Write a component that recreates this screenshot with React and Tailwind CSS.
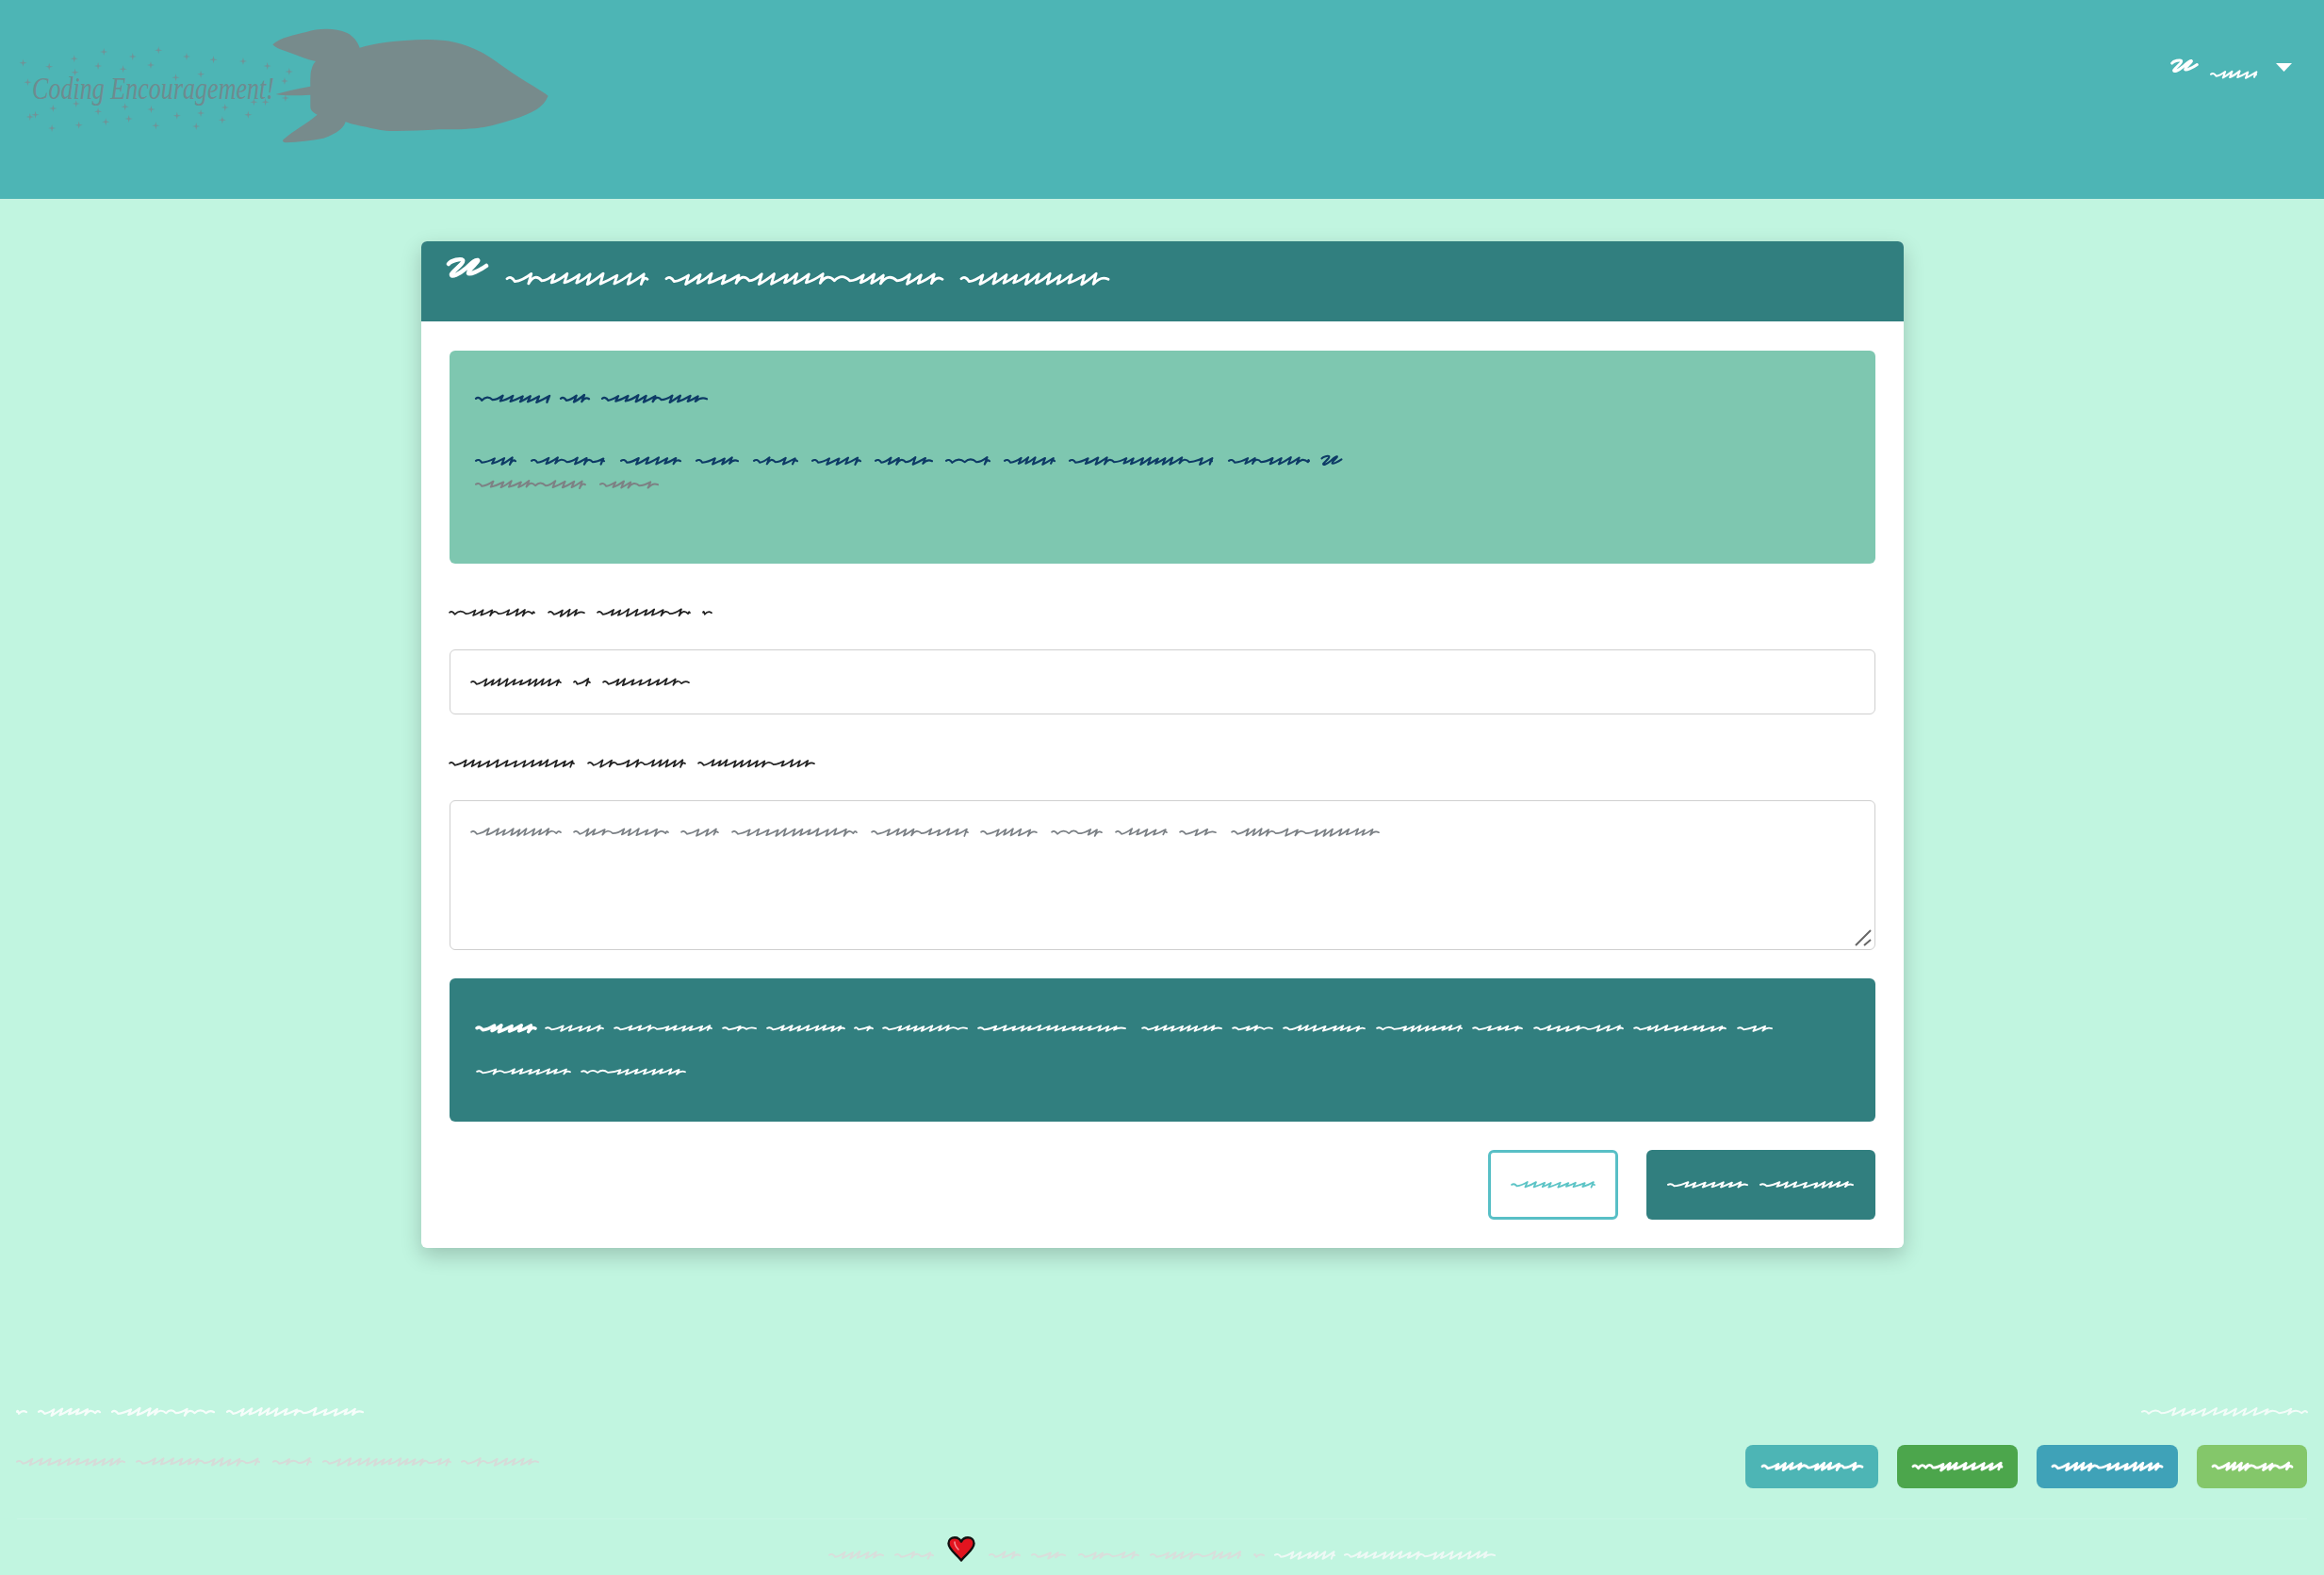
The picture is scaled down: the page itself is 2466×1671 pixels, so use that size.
import React from "react";

function scrawlPath(segs, a, period, seed) {
  let s = seed * 9301 + 49297;
  const rnd = () => {
    s = (s * 9301 + 49297) % 233280;
    return s / 233280;
  };
  const o = segs[0][0];
  const c = a + 1;
  let d = "";
  for (const [x0, x1] of segs) {
    const start = x0 - o;
    const end = x1 - o;
    const back = Math.min(period * 0.3, 3);
    const tail = Math.min(period * 0.7, (end - start) * 0.2);
    let x = start + tail;
    d += `M${start.toFixed(1)} ${(c - a * 0.05).toFixed(1)}Q${(start + tail * 0.5).toFixed(1)} ${(c - a * 0.65).toFixed(1)} ${x.toFixed(1)} ${(c + a * 0.45).toFixed(1)}`;
    while (x < end - period - tail * 0.5) {
      const p = period * (0.8 + rnd() * 0.45);
      const flat = rnd() < 0.12;
      if (flat) {
        const nx = x + p * 1.2;
        d += `Q${(x + p * 0.6).toFixed(1)} ${(c - a * 1.1).toFixed(1)} ${nx.toFixed(1)} ${(c + a * 0.3).toFixed(1)}`;
        x = nx;
      } else {
        const tx = x + p + back;
        const ty = c - a * (0.6 + rnd() * 0.4);
        const bx = tx - back;
        const by = c + a * (0.6 + rnd() * 0.4);
        d += `Q${(x + p * 0.55).toFixed(1)} ${(c + a * 0.3).toFixed(1)} ${tx.toFixed(1)} ${ty.toFixed(1)}L${bx.toFixed(1)} ${by.toFixed(1)}`;
        x = bx;
      }
    }
    d += `Q${((x + end) / 2).toFixed(1)} ${(c - a * 0.6).toFixed(1)} ${end.toFixed(1)} ${(c + a * 0.05).toFixed(1)}`;
  }
  return { d, w: segs[segs.length - 1][1] - o };
}

function Scrawl({ segs, h = 10, sw = 1.6, period = 8, seed = 1, className = "" }) {
  const a = h / 2 - 1;
  const { d, w } = scrawlPath(segs, a, period, seed);
  return (
    <svg width={w} height={h} viewBox={`0 0 ${w} ${h}`} className={`block shrink-0 overflow-visible ${className}`} aria-hidden="true">
      <path d={d} fill="none" stroke="currentColor" strokeWidth={sw} strokeLinecap="round" strokeLinejoin="round" />
    </svg>
  );
}

function ScriptU({ w, h, sw = 3, className = "" }) {
  return (
    <svg width={w} height={h} viewBox="0 0 42 20" className={`block shrink-0 overflow-visible ${className}`} aria-hidden="true">
      <path
        d="M1 5C4 1 14 -1 16 1C18 4 5 13 4 16C3.5 20 12 16 19 10C24 5.5 29 0 32 1C34 2 21 12 22 15C23 17 34 12 41 7"
        fill="none"
        stroke="currentColor"
        strokeWidth={sw}
        strokeLinecap="round"
        strokeLinejoin="round"
      />
    </svg>
  );
}

const stars = [
  [60,200],[128,212],[193,187],[270,165],[345,180],[412,160],[485,180],[555,190],[632,195],[695,210],[752,228],
  [195,230],[255,210],[320,220],[392,207],[457,247],[522,236],[740,258],[72,262],[138,345],[198,330],[255,355],
  [325,340],[393,348],[460,368],[522,360],[585,342],[660,325],[690,325],[742,312],[78,372],[92,365],[275,388],
  [335,378],[135,408],[205,398],[405,400],[510,402],[578,382],[645,365],
];

function Logo() {
  return (
    <div className="relative h-[170px] w-[600px] shrink-0">
      <svg width="600" height="170" viewBox="0 0 600 170" className="block" aria-hidden="true">
        <g transform="translate(280 20) scale(0.3333)">
          <path
            fill="#778b8c"
            d="M28 82C50 60 100 50 135 42C175 30 225 28 265 45C285 55 298 72 305 92C350 78 420 68 520 66C590 66 640 78 700 110C750 140 790 175 860 215C880 228 895 235 905 245C898 262 885 278 865 290C830 310 770 330 700 345C650 352 600 352 560 352C500 355 450 358 400 357C370 355 340 348 330 345C300 340 280 335 260 328C255 345 235 365 190 380C150 388 110 392 70 394C60 392 58 388 62 384C80 368 100 355 115 345C135 332 155 318 170 305C155 298 148 290 148 280L148 242C110 244 70 246 38 240C70 230 110 222 148 215C148 190 148 170 152 160C155 148 160 140 165 135C135 128 110 118 90 110C60 100 40 95 28 82Z"
          />
        </g>
        <g fill="#729297">
          {stars.map(([x, y], i) => (
            <path key={i} d={`M${(x / 2.45).toFixed(1)} ${(y / 3 - 4).toFixed(1)}l.8 3.2 3.2 .8-3.2 .8-.8 3.2-.8-3.2-3.2-.8 3.2-.8z`} />
          ))}
        </g>
      </svg>
      <span className="absolute left-[34px] top-[74px] origin-left scale-x-[0.79] whitespace-nowrap font-['Liberation_Serif',serif] text-[33px] leading-[40px] italic text-[#6f8b8f]">
        Coding Encouragement!
      </span>
    </div>
  );
}

function Heart() {
  return (
    <svg width="30" height="27" viewBox="0 0 30 27" className="block shrink-0" aria-hidden="true">
      <path
        d="M15 25.5C10 19 1.5 14 1.5 7.5C1.5 3.5 4.5 1.2 8 1.2C11 1.2 13.6 2.8 15 5.6C16.4 2.8 19 1.2 22 1.2C25.5 1.2 28.5 3.5 28.5 7.5C28.5 14 20 19 15 25.5Z"
        fill="#e2141f"
        stroke="#111"
        strokeWidth="2.4"
        strokeLinejoin="round"
      />
      <path d="M8 6C8 9 10 12 12 14" fill="none" stroke="#f58d92" strokeWidth="1.6" strokeLinecap="round" />
    </svg>
  );
}

export default function App() {
  return (
    <div className="flex min-h-[1671px] flex-col overflow-hidden bg-[#c1f5e0] font-['Liberation_Sans',sans-serif]">
      <header className="flex h-[212px] shrink-0 justify-between border-b border-[#c8f0e2] bg-[#4db5b5] pr-[34px]">
        <Logo />
        <nav className="mt-[63px] flex items-start text-white">
          <ScriptU w={28} h={15} sw={4.5} />
          <Scrawl segs={[[2346, 2394]]} h={10} sw={2} period={8} seed={3} className="ml-[14px] mt-[11px]" />
          <svg width="17" height="9" viewBox="0 0 17 9" className="ml-[21px] mt-[4px] block" aria-hidden="true">
            <path d="M0 0H17L8.5 9Z" fill="#ffffff" />
          </svg>
        </nav>
      </header>

      <main className="flex justify-center pt-[44px]">
        <section className="w-[1573px] rounded-md bg-white shadow-[0_8px_22px_rgba(0,0,0,0.2)]">
          <div className="flex h-[85px] rounded-t-md bg-[#317f7f] pl-[28px] text-white">
            <ScriptU w={42} h={20} sw={4.5} className="mt-[19px]" />
            <Scrawl
              segs={[[537, 686], [706, 999], [1019, 1175]]}
              h={14}
              sw={2.8}
              period={12}
              seed={5}
              className="ml-[21px] mt-[33px]"
            />
          </div>

          <div className="px-[30px] pb-[30px] pt-[31px]">
            <div className="h-[226px] rounded-md bg-[#7ec7b0] pl-[28px] pt-[46px] text-[#0e3b66]">
              <Scrawl segs={[[506, 583], [596, 626], [640, 751]]} sw={2.3} period={9} seed={7} />
              <div className="mt-[55px] flex items-center">
                <Scrawl
                  segs={[[506, 548], [565, 642], [660, 723], [740, 784], [801, 847], [863, 914], [930, 990], [1005, 1051], [1067, 1120], [1136, 1287], [1305, 1390]]}
                  sw={2.1}
                  period={9}
                  seed={11}
                />
                <ScriptU w={22} h={12} sw={4} className="ml-[13px]" />
              </div>
              <Scrawl segs={[[506, 622], [638, 699]]} sw={2} period={9} seed={13} className="mt-[14px] text-[#7d8184]" />
            </div>

            <Scrawl segs={[[477, 567], [582, 620], [634, 732], [746, 755]]} sw={1.7} period={8} seed={17} className="mt-[47px] text-[#222222]" />
            <div className="mt-[34px] flex h-[69px] items-center rounded-md border border-[#cfcfcf] pl-[22px] text-[#222222]">
              <Scrawl segs={[[500, 595], [609, 626], [640, 731]]} sw={1.7} period={8} seed={19} />
            </div>

            <Scrawl segs={[[477, 609], [624, 727], [741, 864]]} sw={1.7} period={8} seed={23} className="mt-[47px] text-[#222222]" />
            <div className="relative mt-[34px] h-[159px] rounded-md border border-[#cfcfcf] pl-[22px] pt-[28px] text-[#7b8085]">
              <Scrawl
                segs={[[500, 595], [609, 709], [723, 762], [777, 909], [925, 1027], [1041, 1100], [1116, 1169], [1184, 1238], [1252, 1290], [1307, 1463]]}
                sw={1.7}
                period={8.5}
                seed={29}
              />
              <svg width="18" height="18" viewBox="0 0 18 18" className="absolute bottom-[3px] right-[3px] block" aria-hidden="true">
                <path d="M17 1L1 17M17 11L10 17" stroke="#666666" strokeWidth="2" fill="none" />
              </svg>
            </div>

            <div className="mt-[30px] h-[152px] rounded-md bg-[#317f7f] pl-[29px] pt-[48px] text-white">
              <div className="flex">
                <Scrawl segs={[[507, 569]]} sw={3.4} period={9} seed={31} />
                <Scrawl
                  segs={[[580, 641], [653, 756], [768, 803], [815, 897], [908, 927], [938, 1027], [1039, 1195], [1213, 1297], [1309, 1351], [1363, 1449], [1462, 1552], [1564, 1616], [1629, 1723], [1735, 1832], [1845, 1881]]}
                  h={8}
                  sw={1.8}
                  period={9}
                  seed={37}
                  className="ml-[11px] mt-[1px]"
                />
              </div>
              <Scrawl segs={[[507, 606], [618, 728]]} h={8} sw={1.8} period={9} seed={41} className="mt-[37px]" />
            </div>

            <div className="mt-[30px] flex justify-end gap-[30px]">
              <div className="flex h-[74px] w-[138px] items-center justify-center rounded-md border-[3px] border-[#58bfc6] text-[#5cc4c6]">
                <Scrawl segs={[[1604, 1692]]} h={8} sw={1.8} period={8} seed={43} />
              </div>
              <div className="flex h-[74px] w-[243px] items-center justify-center rounded-md bg-[#317f7f] text-white">
                <Scrawl segs={[[1770, 1854], [1868, 1966]]} h={8} sw={1.9} period={9.5} seed={47} />
              </div>
            </div>
          </div>
        </section>
      </main>

      <footer className="mt-[169px] px-[18px]">
        <div className="flex justify-between">
          <div>
            <Scrawl segs={[[18, 28], [41, 106], [119, 227], [241, 385]]} sw={2.2} period={9} seed={53} className="text-[#f6fdfa]" />
            <Scrawl segs={[[18, 132], [145, 275], [290, 330], [343, 478], [490, 571]]} sw={2} period={9} seed={59} className="mt-[43px] text-[#d6dbd8]" />
          </div>
          <div className="flex flex-col items-end">
            <Scrawl segs={[[2273, 2448]]} sw={2} period={10} seed={61} className="text-[#f2fcf8]" />
            <div className="mt-[30px] flex gap-[20px] text-white">
              <div className="flex h-[46px] w-[141px] items-center justify-center rounded-lg bg-[#4db5b5]">
                <Scrawl segs={[[1869, 1975]]} sw={2.8} period={8} seed={67} />
              </div>
              <div className="flex h-[46px] w-[128px] items-center justify-center rounded-lg bg-[#4ca64c]">
                <Scrawl segs={[[2030, 2124]]} sw={2.8} period={8} seed={71} />
              </div>
              <div className="flex h-[46px] w-[150px] items-center justify-center rounded-lg bg-[#3fa2b8]">
                <Scrawl segs={[[2178, 2294]]} sw={2.8} period={8} seed={73} />
              </div>
              <div className="flex h-[46px] w-[117px] items-center justify-center rounded-lg bg-[#84c76a]">
                <Scrawl segs={[[2348, 2432]]} sw={2.8} period={8} seed={79} />
              </div>
            </div>
          </div>
        </div>
        <div className="mt-[32px] flex items-end justify-center border-t border-[#c9f6e5] pt-[18px]">
          <Scrawl segs={[[878, 935], [948, 988]]} sw={2} period={9} seed={83} className="mb-[2px] text-[#d9dedb]" />
          <div className="ml-[15px]">
            <Heart />
          </div>
          <Scrawl segs={[[1050, 1082], [1095, 1130], [1145, 1208], [1221, 1316], [1331, 1341]]} sw={2} period={9} seed={89} className="mb-[2px] ml-[15px] text-[#d9dedb]" />
          <Scrawl segs={[[1354, 1417], [1428, 1587]]} sw={2} period={9} seed={97} className="mb-[2px] ml-[12px] text-[#eef9f5]" />
        </div>
      </footer>
    </div>
  );
}
